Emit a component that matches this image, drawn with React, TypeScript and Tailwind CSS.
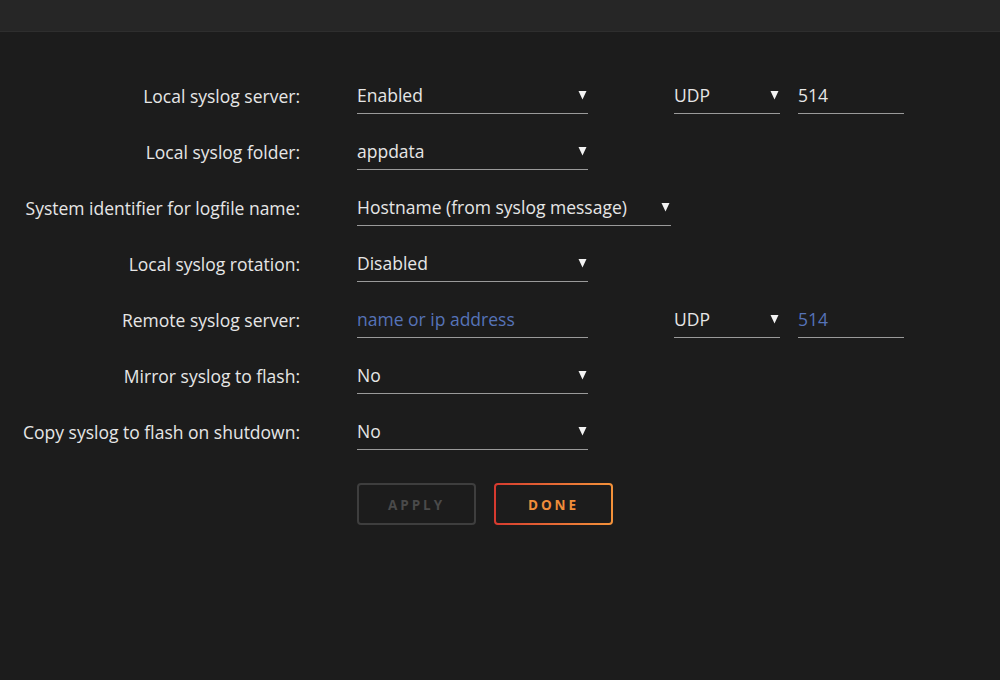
import React from "react";

const font = { fontFamily: '"Open Sans", "Noto Sans", sans-serif' };

function Arrow() {
  return (
    <svg width="9" height="10" viewBox="0 0 9 10" className="absolute right-[1px] top-[12px]">
      <path d="M0.5 1H8.5L4.5 9.5Z" fill="#f2f2f2" />
    </svg>
  );
}

function Select({ value, width }: { value: string; width: string }) {
  return (
    <div className={`relative flex h-[36px] items-center border-b border-[#9a9a9a] ${width}`}>
      <span className="text-[17.5px] text-[#e6e6e6]">{value}</span>
      <Arrow />
    </div>
  );
}

function Field({ value, width, placeholder }: { value: string; width: string; placeholder?: boolean }) {
  return (
    <div className={`flex h-[36px] items-center border-b border-[#9a9a9a] ${width}`}>
      <span className={`text-[17.5px] ${placeholder ? "text-[#5673b8]" : "text-[#e6e6e6]"}`}>{value}</span>
    </div>
  );
}

const rows: { label: string; content: React.ReactNode }[] = [
  {
    label: "Local syslog server:",
    content: (
      <>
        <Select value="Enabled" width="w-[231px]" />
        <div className="ml-[86px]">
          <Select value="UDP" width="w-[106px]" />
        </div>
        <div className="ml-[18px]">
          <Field value="514" width="w-[106px]" />
        </div>
      </>
    ),
  },
  { label: "Local syslog folder:", content: <Select value="appdata" width="w-[231px]" /> },
  {
    label: "System identifier for logfile name:",
    content: <Select value="Hostname (from syslog message)" width="w-[314px]" />,
  },
  { label: "Local syslog rotation:", content: <Select value="Disabled" width="w-[231px]" /> },
  {
    label: "Remote syslog server:",
    content: (
      <>
        <Field value="name or ip address" width="w-[231px]" placeholder />
        <div className="ml-[86px]">
          <Select value="UDP" width="w-[106px]" />
        </div>
        <div className="ml-[18px]">
          <Field value="514" width="w-[106px]" placeholder />
        </div>
      </>
    ),
  },
  { label: "Mirror syslog to flash:", content: <Select value="No" width="w-[231px]" /> },
  { label: "Copy syslog to flash on shutdown:", content: <Select value="No" width="w-[231px]" /> },
];

export default function App() {
  return (
    <div className="min-h-[680px] w-full bg-[#1c1c1c]" style={font}>
      {/* Header */}
      <div className="h-[32px] border-b border-[#2e2e2e] bg-[#262626]" />

      {/* Form */}
      <div className="pt-[36px]">
        {rows.map((row) => (
          <div key={row.label} className="flex h-[56px] items-center">
            <div className="w-[301px] pr-[1px] text-right text-[17.5px] text-[#e6e6e6]">{row.label}</div>
            <div className="ml-[56px] flex items-center">{row.content}</div>
          </div>
        ))}

        <div className="ml-[357px] mt-[23px] flex gap-[18px]">
          <button className="flex h-[42px] w-[119px] items-center justify-center rounded-[4px] border-2 border-[#3e3e3e] pt-[2px] text-[13.5px] font-bold tracking-[0.22em] text-[#4a4a4a]">
            APPLY
          </button>
          <div className="h-[42px] w-[119px] rounded-[4px] bg-gradient-to-r from-[#d6392f] to-[#f3923a] p-[2px]">
            <button className="flex h-full w-full items-center justify-center rounded-[2px] bg-[#1c1c1c] pt-[2px] text-[13.5px] font-bold tracking-[0.22em] text-[#f08d3a]">
              DONE
            </button>
          </div>
        </div>
      </div>
    </div>
  );
}
